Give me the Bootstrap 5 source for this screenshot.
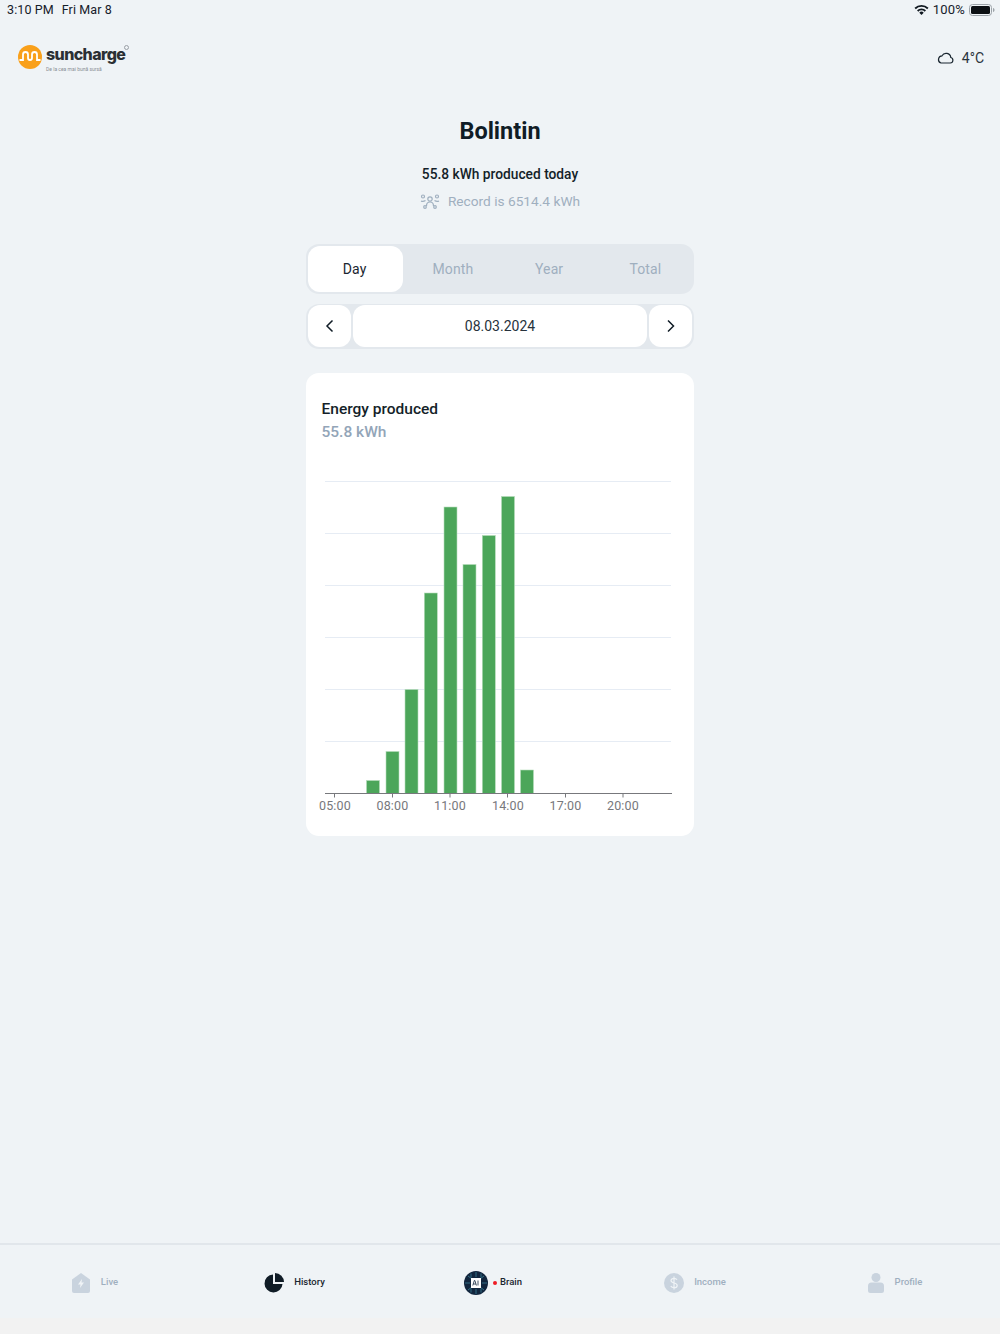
<!DOCTYPE html>
<html>
<head>
    <title>Suncharge History</title>
    <link href="https://cdn.jsdelivr.net/npm/bootstrap@5.3.3/dist/css/bootstrap.min.css" rel="stylesheet">
    <script src="https://cdn.jsdelivr.net/npm/bootstrap@5.3.3/dist/js/bootstrap.bundle.min.js"></script>
    <style>
        html, body { height: 1334px; overflow: hidden; }
        body { background-color: #eff3f6; font-family: Roboto, "Liberation Sans", sans-serif; color: #101c26; }
        .status-bar { height: 20px; padding: 0 5px 0 7px; font-size: 13px; letter-spacing: .2px; color: #16202a; }
        .status-left { gap: 8px; font-size: 12.5px; letter-spacing: .1px; }
        .top-head { height: 75px; padding: 0 16px 0 18px; }
        .logo-block { margin-bottom: 1px; }
        .logo-name { font-family: Inter, Roboto, sans-serif; font-weight: 800; font-size: 16px; line-height: 17px; letter-spacing: -.6px; color: #2b2f33; }
        .logo-tag { font-size: 5px; line-height: 5px; color: #8a8f95; margin-left: 0; }
        .logo-reg { width: 5px; height: 5px; border: 1px solid #9aa0a6; border-radius: 50%; top: -1px; right: -4px; }
        .weather { font-size: 14px; color: #2a343d; margin-top: 1px; }
        .page-title { font-size: 23.5px; font-weight: 700; line-height: 30px; margin-top: 21px; color: #101c26; }
        .today-line { font-size: 13.75px; font-weight: 500; margin-top: 18px; line-height: 20px; color: #141f29; }
        .record-line { font-size: 13.7px; color: #9fafbf; margin-top: 7px; line-height: 20px; }
        .panel-col { width: 388px; }
        .period-tabs { background: #e3e8ed; border-radius: 13px; padding: 2px; margin-top: 33px; height: 50px; }
        .period-tab { flex: 1 1 0; font-size: 14px; color: #9fafbf; border-radius: 12px; padding-left: 3px; letter-spacing: .1px; }
        .period-tab.is-on { background: #fff; color: #1a2630; padding-left: 0; padding-right: 2px; }
        .date-row { margin-top: 10px; background: #e3e8ed; border-radius: 13px; padding: 1px 2px 2px; height: 45px; gap: 2px; }
        .date-box { background: #fff; border-radius: 12px; font-size: 14px; color: #27323c; }
        .date-arrow { width: 43px; flex: none; }
        .chart-card { margin-top: 24px; background: #fff; border-radius: 13px; height: 463px; padding: 26px 16px 0 15.5px; }
        .chart-title { font-size: 15.5px; font-weight: 500; line-height: 20px; color: #141f29; }
        .chart-value { font-size: 15.5px; font-weight: 500; line-height: 20px; color: #93a5b8; margin-top: 3px; }
        .chart-svg { display: block; margin: 31px 0 0 -15.5px; }
        .chart-svg text { font-size: 12.5px; fill: #77787c; text-anchor: middle; letter-spacing: .2px; }
        .tab-bar { height: 75px; border-top: 2px solid #e1e6eb; flex: none; position: relative; }
        .tab-item { width: 200px; font-size: 9.5px; font-weight: 500; color: #9fafbf; gap: 10px; padding: 2px 10px 0 0; }
        .tab-item.is-on { color: #1a2630; }
        .tab-item.tab-left { padding-right: 11px; }
        .tab-item.tab-brain { gap: 5px; padding-right: 14px; }
        .tab-gap { height: 16px; background: #f2f2f2; flex: none; }
        .red-dot { width: 4px; height: 4px; background: #ee1c25; border-radius: 50%; margin: 0 -2px 0 0; }
    </style>
</head>
<body class="d-flex flex-column">
    <div class="status-bar d-flex justify-content-between align-items-center">
        <div class="status-left d-flex"><span>3:10 PM</span><span>Fri Mar 8</span></div>
        <div class="d-flex align-items-center">
            <svg width="15" height="12" viewBox="0 0 15 12" class="me-1"><path d="M.5 3.8a10 10 0 0 1 14 0l-1.3 1.4a8 8 0 0 0-11.4 0z M3 6.3a6.500 6.500 0 0 1 9 0l-1.300 1.400a4.500 4.500 0 0 0-6.400 0z M5.300 8.700a3 3 0 0 1 4.400 0L7.500 11z" fill="#101820"/></svg>
            <span>100%</span>
            <svg width="26" height="12" viewBox="0 0 26 12" class="ms-1"><rect x=".5" y=".5" width="22" height="11" rx="3" fill="none" stroke="#9ca3a9"/><rect x="2" y="2" width="19" height="8" rx="1.500" fill="#0b0f13"/><path d="M24 4v4c1-.3 1.500-1 1.500-2S25 4.300 24 4z" fill="#9ca3a9"/></svg>
        </div>
    </div>

    <div class="top-head d-flex justify-content-between align-items-center">
        <div class="logo-block d-flex align-items-center">
            <svg width="24" height="24" viewBox="0 0 24 24"><circle cx="12" cy="12" r="12" fill="#f9a01b"/><path d="M1.500 15h3.500V9.500a2.500 2.500 0 0 1 5 0V13a1.500 1.500 0 0 0 4 0V9.500a2.500 2.500 0 0 1 5 0V15h3.500" fill="none" stroke="#fff" stroke-width="1.800"/></svg>
            <div class="ms-1 position-relative">
                <div class="logo-name position-relative d-inline-block">suncharge<span class="logo-reg position-absolute"></span></div>
                <div class="logo-tag">De la cea mai bună sursă</div>
            </div>
        </div>
        <div class="weather d-flex align-items-center gap-2">
            <svg width="17" height="12" viewBox="0 0 17 12"><path d="M4 11h9.300a2.800 2.800 0 0 0 .5-5.500A4.700 4.700 0 0 0 5 3.800 3.700 3.700 0 0 0 4 11z" fill="none" stroke="#1a2630" stroke-width="1.200"/></svg>
            <span>4°C</span>
        </div>
    </div>

    <main class="flex-grow-1 d-flex flex-column align-items-center">
        <div class="page-title">Bolintin</div>
        <div class="today-line">55.8 kWh produced today</div>
        <div class="record-line d-flex align-items-center gap-2">
            <svg width="20" height="15" viewBox="0 0 20 15" fill="none" stroke="#9fafbf" stroke-width="1.200"><circle cx="10" cy="5" r="2.200"/><path d="M6.500 12c0-3 1.500-4 3.500-4s3.500 1 3.500 4"/><circle cx="3" cy="2.500" r="1.500"/><circle cx="17" cy="2.500" r="1.500"/><path d="M1 7c1 .5 3 .5 4.500-.5M19 7c-1 .5-3 .5-4.500-.5"/><circle cx="5" cy="13" r="1.300"/><circle cx="15" cy="13" r="1.300"/></svg>
            <span>Record is 6514.4 kWh</span>
        </div>

        <div class="panel-col">
            <div class="period-tabs d-flex">
                <div class="period-tab is-on d-flex align-items-center justify-content-center">Day</div>
                <div class="period-tab d-flex align-items-center justify-content-center">Month</div>
                <div class="period-tab d-flex align-items-center justify-content-center">Year</div>
                <div class="period-tab d-flex align-items-center justify-content-center">Total</div>
            </div>

            <div class="date-row d-flex">
                <div class="date-box date-arrow d-flex align-items-center justify-content-center">
                    <svg width="10" height="14" viewBox="0 0 10 14"><path d="M7.500 1.500 2 7 7.500 12.500" fill="none" stroke="#101c26" stroke-width="1.500"/></svg>
                </div>
                <div class="date-box flex-grow-1 d-flex align-items-center justify-content-center">08.03.2024</div>
                <div class="date-box date-arrow d-flex align-items-center justify-content-center">
                    <svg width="10" height="14" viewBox="0 0 10 14"><path d="M2 1.500 7.500 7 2 12.500" fill="none" stroke="#101c26" stroke-width="1.500"/></svg>
                </div>
            </div>

            <div class="chart-card">
                <div class="chart-title">Energy produced</div>
                <div class="chart-value">55.8 kWh</div>
                <svg class="chart-svg" width="388" height="345" viewBox="0 0 388 345">
                    <g stroke="#e6ecf4" stroke-width="1">
                        <path d="M19 8.500H365M19 60.500H365M19 112.500H365M19 164.500H365M19 216.500H365M19 268.500H365"/>
                    </g>
                    <g fill="#4ca65a" stroke="#b6dcbb" stroke-width=".6">
                        <rect x="60.500" y="307.500" width="13" height="13"/>
                        <rect x="80" y="278.500" width="13" height="42"/>
                        <rect x="99" y="216.500" width="13" height="104"/>
                        <rect x="118.300" y="120" width="13" height="200.500"/>
                        <rect x="138" y="34" width="13" height="286.500"/>
                        <rect x="157" y="91.500" width="13" height="229"/>
                        <rect x="176.300" y="62.500" width="13" height="258"/>
                        <rect x="195.500" y="23.500" width="13" height="297"/>
                        <rect x="214.500" y="297" width="13" height="23.500"/>
                    </g>
                    <path d="M19 320.500H366" stroke="#77787c" stroke-width="1"/>
                    <path d="M28.500 320.500v4M86.500 320.500v4M144 320.500v4M201.500 320.500v4M259.500 320.500v4M317 320.500v4" stroke="#77787c" stroke-width="1"/>
                    <text x="29" y="337">05:00</text>
                    <text x="86.500" y="337">08:00</text>
                    <text x="144" y="337">11:00</text>
                    <text x="202" y="337">14:00</text>
                    <text x="259.500" y="337">17:00</text>
                    <text x="317" y="337">20:00</text>
                </svg>
            </div>
        </div>
    </main>

    <nav class="tab-bar d-flex align-items-center">
        <div class="tab-item tab-left d-flex align-items-center justify-content-center">
            <svg width="20" height="20" viewBox="0 0 20 20"><path d="M1 6.500 10 0l9 6.500V18a2 2 0 0 1-2 2H3a2 2 0 0 1-2-2z" fill="#c9d3de"/><path d="M11 6 7 11.500h2.500L9 15l4-5.500h-2.500z" fill="#eff3f6"/></svg>
            <span>Live</span>
        </div>
        <div class="tab-item tab-left is-on d-flex align-items-center justify-content-center">
            <svg width="20" height="20" viewBox="0 0 20 20"><path d="M9 1.500A9 9 0 1 0 18.500 11H9z" fill="#101c26"/><path d="M11 0a9 9 0 0 1 9 9h-9z" fill="#101c26"/></svg>
            <span>History</span>
        </div>
        <div class="tab-item tab-brain is-on d-flex align-items-center justify-content-center">
            <svg width="24" height="24" viewBox="0 0 24 24"><circle cx="12" cy="12" r="12" fill="#12263e"/><g stroke="#3f8ea5" stroke-width=".7" fill="none"><path d="M12 1v5M12 18v5M1 12h5M18 12h5M4 5l4 3M20 5l-4 3M4 19l4-3M20 19l-4-3M7 2.500v4M17 2.500v4M7 21.500v-4M17 21.500v-4"/></g><rect x="7" y="7" width="10" height="10" fill="#fff"/><path d="M8.800 14.500 10.300 9.500h.6l1.500 5M9.400 13h2.400M14 9.500v5" fill="none" stroke="#12263e" stroke-width=".8"/></svg>
            <span class="red-dot"></span>
            <span>Brain</span>
        </div>
        <div class="tab-item d-flex align-items-center justify-content-center">
            <svg width="20" height="20" viewBox="0 0 20 20"><circle cx="10" cy="10" r="10" fill="#c9d3de"/><path d="M13 6.800c-.6-1-1.700-1.500-3-1.500-1.800 0-3 .9-3 2.300 0 3.200 6.200 1.600 6.200 4.800 0 1.400-1.300 2.300-3.200 2.300-1.400 0-2.600-.6-3.200-1.700M10 3.500v13" fill="none" stroke="#eff3f6" stroke-width="1.200"/></svg>
            <span>Income</span>
        </div>
        <div class="tab-item tab-left d-flex align-items-center justify-content-center">
            <svg width="18" height="20" viewBox="0 0 18 20"><circle cx="9" cy="4.500" r="4.500" fill="#c9d3de"/><path d="M1 13a3.500 3.500 0 0 1 3.500-3.500h9A3.500 3.500 0 0 1 17 13v4.500a2.500 2.500 0 0 1-2.500 2.500h-11A2.500 2.500 0 0 1 1 17.500z" fill="#c9d3de"/></svg>
            <span>Profile</span>
        </div>
    </nav>
    <div class="tab-gap"></div>
</body>
</html>
